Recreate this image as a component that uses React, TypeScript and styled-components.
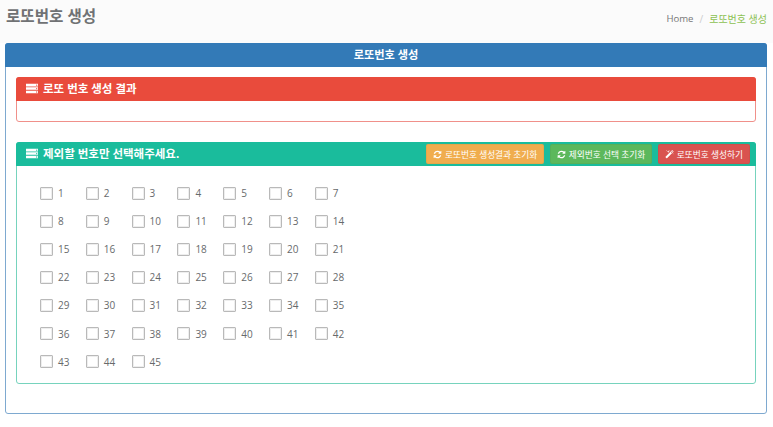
import { createGlobalStyle } from "styled-components";
import styled from "styled-components";

const GlobalStyle = createGlobalStyle`
    html, body {
        margin: 0;
        padding: 0;
        background: #ffffff;
        font-family: "Open Sans", "Noto Sans CJK KR", sans-serif;
        font-size: 13px;
        color: #676a6c;
    }
    * {
        box-sizing: border-box;
    }
`

const PageHeader = styled.div`
    display: flex;
    justify-content: space-between;
    align-items: flex-start;
    height: 43px;
    padding: 5px 6px 0 6px;
    background-color: #fbfbfb;
`

const PageTitle = styled.h1`
    margin: 0;
    font-size: 15.6px;
    line-height: 22px;
    font-weight: 700;
    color: #707274;
`

const Breadcrumb = styled.div`
    display: flex;
    align-items: center;
    gap: 6px;
    margin-top: 7px;
    font-size: 10px;
    line-height: 14px;
    color: #777777;
`

const HomeCrumb = styled.span`
    font-size: 9.6px;
`

const Divider = styled.span`
    color: #cccccc;
`

const ActiveCrumb = styled.span`
    color: #8cc152;
`

const MainPanel = styled.section`
    width: 762px;
    height: 371px;
    margin-left: 5px;
    border: 1px solid #7ea9d0;
    border-radius: 3px;
    background: #ffffff;
`

const MainHeading = styled.div`
    height: 24px;
    margin: -1px -1px 0;
    background-color: #337ab7;
    border-radius: 3px 3px 0 0;
    color: #ffffff;
    font-size: 11.2px;
    font-weight: 700;
    line-height: 24px;
    text-align: center;
`

const MainBody = styled.div`
    display: flex;
    flex-direction: column;
    gap: 20px;
    padding: 10px 10px 0;
`

const Box = styled.div<{ $line: string }>`
    border: 1px solid ${p => p.$line};
    border-radius: 3px;
    background: #ffffff;
`

const BoxHeading = styled.div<{ $color: string }>`
    display: flex;
    align-items: center;
    justify-content: space-between;
    height: 24px;
    margin: -1px -1px 0;
    padding: 0 6px 0 10px;
    background-color: ${p => p.$color};
    border-radius: 3px 3px 0 0;
`

const BoxTitle = styled.div`
    display: flex;
    align-items: center;
    gap: 5px;
    color: #ffffff;
    font-size: 11.5px;
    font-weight: 700;
    line-height: 24px;
`

const ResultBody = styled.div`
    height: 20px;
`

const Buttons = styled.div`
    display: flex;
    gap: 5.5px;
`

const ActionButton = styled.button<{ $color: string }>`
    display: flex;
    align-items: center;
    gap: 3px;
    height: 20px;
    padding: 0 6px 0 6px;
    border: 1px solid rgba(0, 0, 0, 0.04);
    border-radius: 2px;
    background-color: ${p => p.$color};
    color: #ffffff;
    font-family: inherit;
    font-size: 8.7px;
    white-space: nowrap;
`

const NumberGrid = styled.div`
    display: grid;
    grid-template-columns: repeat(7, 45.8px);
    grid-auto-rows: 28.1px;
    align-items: center;
    padding: 13px 23px 7px;
`

const NumberItem = styled.label`
    display: flex;
    align-items: center;
    gap: 5px;
    font-size: 10px;
    color: #676a6c;
`

const Check = styled.span`
    width: 13px;
    height: 13px;
    border: 1px solid #b9b9b9;
    border-radius: 1px;
    background: #ffffff;
    box-shadow: inset 0 0 0 1px #eeeeee;
`

const Icon = ({ d, size }: { d: string; size: number }) => (
    <svg width={size} height={size} viewBox="0 0 1792 1792" fill="currentColor" fillRule="evenodd">
        <path d={d} />
    </svg>
)

// three solid rows, each with the small status dot knocked out on the right
const SERVER = "M0 128h1792v384H0zM1504 320a96 96 0 1 0 192 0a96 96 0 1 0-192 0zM0 640h1792v384H0zM1504 832a96 96 0 1 0 192 0a96 96 0 1 0-192 0zM0 1152h1792v384H0zM1504 1344a96 96 0 1 0 192 0a96 96 0 1 0-192 0z"
const REFRESH = "M1639 1056q0 5-1 7-64 268-268 434.5t-478 166.5q-146 0-282.5-55t-243.5-157l-129 129q-19 19-45 19t-45-19-19-45v-448q0-26 19-45t45-19h448q26 0 45 19t19 45-19 45l-137 137q71 66 161 102t187 36q134 0 250-65t186-179q11-17 53-117 8-23 30-23h192q13 0 22.5 9.5t9.5 22.5zm25-800v448q0 26-19 45t-45 19h-448q-26 0-45-19t-19-45 19-45l138-138q-148-137-349-137-134 0-250 65t-186 179q-11 17-53 117-8 23-30 23h-199q-13 0-22.5-9.5t-9.5-22.5v-7q65-268 270-434.5t480-166.5q146 0 284 55.5t245 156.5l130-129q19-19 45-19t45 19 19 45z"
const MAGIC = "M1254 581l293-293-107-107-293 293zm447-293q0 27-18 45l-1286 1286q-18 18-45 18t-45-18l-198-198q-18-18-18-45t18-45l1286-1286q18-18 45-18t45 18l198 198q18 18 18 45zm-1351-190l98 30-98 30-30 98-30-98-98-30 98-30 30-98zm350 162l196 60-196 60-60 196-60-196-196-60 196-60 60-196zm930 478l98 30-98 30-30 98-30-98-98-30 98-30 30-98zm-640-640l98 30-98 30-30 98-30-98-98-30 98-30 30-98z"

const numbers = Array.from({ length: 45 }, (_, i) => i + 1)

const App = () => {
    return (
        <>
            <GlobalStyle />
            <PageHeader>
                <PageTitle>로또번호 생성</PageTitle>
                <Breadcrumb>
                    <HomeCrumb>Home</HomeCrumb>
                    <Divider>/</Divider>
                    <ActiveCrumb>로또번호 생성</ActiveCrumb>
                </Breadcrumb>
            </PageHeader>

            <MainPanel>
                <MainHeading>로또번호 생성</MainHeading>
                <MainBody>
                    <Box $line="#f0908a">
                        <BoxHeading $color="#e94b3c">
                            <BoxTitle><Icon d={SERVER} size={12} /> 로또 번호 생성 결과</BoxTitle>
                        </BoxHeading>
                        <ResultBody />
                    </Box>

                    <Box $line="#76d3bd">
                        <BoxHeading $color="#1abc9c">
                            <BoxTitle><Icon d={SERVER} size={12} /> 제외할 번호만 선택해주세요.</BoxTitle>
                            <Buttons>
                                <ActionButton $color="#f0ad4e"><Icon d={REFRESH} size={9} /> 로또번호 생성결과 초기화</ActionButton>
                                <ActionButton $color="#5cb85c"><Icon d={REFRESH} size={9} /> 제외번호 선택 초기화</ActionButton>
                                <ActionButton $color="#d9534f"><Icon d={MAGIC} size={9} /> 로또번호 생성하기</ActionButton>
                            </Buttons>
                        </BoxHeading>
                        <NumberGrid>
                            {numbers.map(n => (
                                <NumberItem key={n}>
                                    <Check />
                                    {n}
                                </NumberItem>
                            ))}
                        </NumberGrid>
                    </Box>
                </MainBody>
            </MainPanel>
        </>
    )
}

export default App
